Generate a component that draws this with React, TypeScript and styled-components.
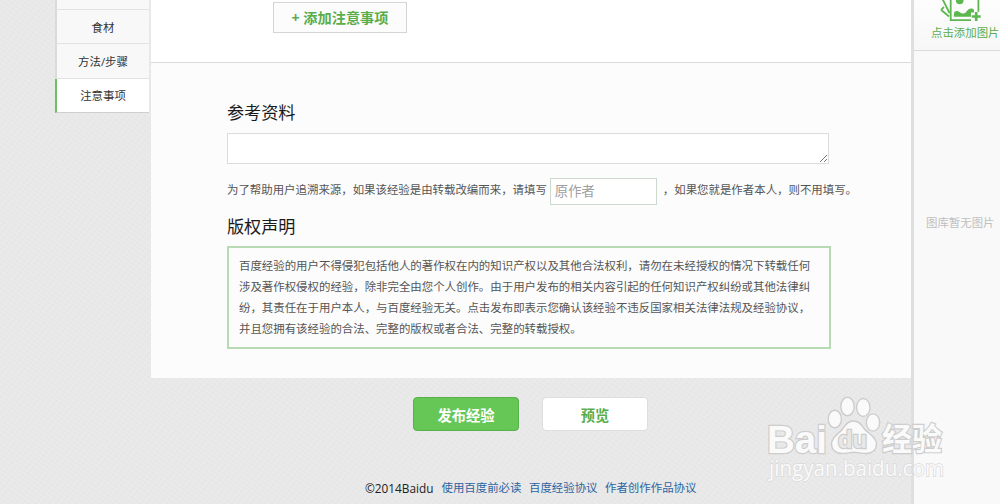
import React from 'react';
import styled, { createGlobalStyle } from 'styled-components';

const GlobalStyle = createGlobalStyle`
  * {
    box-sizing: border-box;
  }

  body {
    margin: 0;
    font-family: "Open Sans", "Noto Sans CJK SC", sans-serif;
    font-size: 11.43px;
    color: #555;
  }
`;

const steps = ['食材', '方法/步骤', '注意事项'];

const footerLinks = ['使用百度前必读', '百度经验协议', '作者创作作品协议'];

const AddPictureIcon: React.FC = () => (
  <svg width="44" height="22" viewBox="0 0 44 22" fill="none" stroke="#5db750" strokeWidth="1.8">
    <path d="M3.5 -1 L10.5 13 M2 9.8 L10 16.5 M2 9.8 L5 7" />
    <path d="M11.7 -1 V20.2 H32 M39.4 -1 V11.8" />
    <circle cx="20.7" cy="0.4" r="3.8" fill="#5db750" stroke="none" />
    <path
      d="M15 16.8 V13 C15.5 10.8 18.5 10.3 20.5 12 C23 14.2 25.500 14 27.500 11.500 C29.500 8.500 33 7.500 35 10 V12.500 H32 V16.800 Z"
      fill="#5db750"
      stroke="none"
    />
    <path d="M37.2 12 V21 M32.7 16.5 H41.7" strokeWidth="2.6" />
  </svg>
);

const BaiduLogo: React.FC = () => (
  <svg width="200" height="100" viewBox="0 0 200 100">
    <g fill="#fafafa" stroke="#cdcdcd" strokeWidth="1.4">
      <ellipse cx="94.8" cy="29" rx="6.6" ry="8.8" />
      <ellipse cx="107.5" cy="16.5" rx="6.7" ry="9.2" />
      <ellipse cx="123.3" cy="17.5" rx="6.7" ry="9" />
      <ellipse cx="133" cy="32.5" rx="6.7" ry="8.6" />
      <path d="M113.500 31 C119 31 121.500 34.500 124 38.500 C127 43 136.500 46.500 136.500 54 C136.500 60 132 63.500 126 63.500 C121 63.500 118 62.300 114 62.300 C110 62.300 107 63.500 102 63.500 C96 63.500 91.500 60 91.500 54 C91.500 46.500 100 43 103 38.500 C105.500 34.500 108 31 113.500 31 Z" />
    </g>
    <LogoText x="27" y="62.5" $size={39} textLength="60" lengthAdjust="spacingAndGlyphs">Bai</LogoText>
    <LogoText x="98" y="58" $size={23} $hollow textLength="29" lengthAdjust="spacingAndGlyphs">du</LogoText>
    <LogoText x="142" y="60" $size={31} textLength="60" lengthAdjust="spacingAndGlyphs">经验</LogoText>
    <LogoText x="29" y="85.5" $size={21} $thin textLength="175" lengthAdjust="spacingAndGlyphs">jingyan.baidu.com</LogoText>
  </svg>
);

const App: React.FC = () => {
  return (
    <Page>
      <GlobalStyle />
      <StepNav>
        <StepItem $first />
        {steps.map((step, index) => (
          <StepItem key={step} $active={index === steps.length - 1}>{step}</StepItem>
        ))}
      </StepNav>

      <Content>
        <NoticeSection>
          <AddButton>+ 添加注意事项</AddButton>
        </NoticeSection>
        <ReferenceSection>
          <Title>参考资料</Title>
          <ReferenceInput>
            <svg width="9" height="9" viewBox="0 0 9 9" stroke="#777" strokeWidth="1">
              <path d="M1 8 L8 1 M5 8 L8 5" />
            </svg>
          </ReferenceInput>
          <SourceRow>
            <span>为了帮助用户追溯来源，如果该经验是由转载改编而来，请填写</span>
            <AuthorInput placeholder="原作者" />
            <span>，如果您就是作者本人，则不用填写。</span>
          </SourceRow>
          <Title>版权声明</Title>
          <Copyright>
            <p>百度经验的用户不得侵犯包括他人的著作权在内的知识产权以及其他合法权利，请勿在未经授权的情况下转载任何</p>
            <p>涉及著作权侵权的经验，除非完全由您个人创作。由于用户发布的相关内容引起的任何知识产权纠纷或其他法律纠</p>
            <p>纷，其责任在于用户本人，与百度经验无关。点击发布即表示您确认该经验不违反国家相关法律法规及经验协议，</p>
            <p>并且您拥有该经验的合法、完整的版权或者合法、完整的转载授权。</p>
          </Copyright>
        </ReferenceSection>
        <Actions>
          <ActionButton $primary>发布经验</ActionButton>
          <ActionButton>预览</ActionButton>
        </Actions>
        <Footer>
          <span>©2014Baidu</span>
          {footerLinks.map((link) => (
            <a key={link}>{link}</a>
          ))}
        </Footer>
      </Content>

      <Gallery>
        <GalleryHeader>
          <AddPictureIcon />
          <span>点击添加图片</span>
        </GalleryHeader>
        <GalleryEmpty>图库暂无图片</GalleryEmpty>
      </Gallery>

      <Watermark>
        <BaiduLogo />
      </Watermark>
    </Page>
  );
};

export default App;

const Page = styled.div`
  position: relative;
  display: flex;
  width: 1000px;
  height: 504px;
  padding-left: 55px;
  overflow: hidden;
  background-color: #e8e8e8;
  background-image:
    repeating-linear-gradient(35deg, transparent 0 2px, rgba(255, 255, 255, 0.1) 2px 4px),
    repeating-linear-gradient(-50deg, transparent 0 3px, rgba(0, 0, 0, 0.008) 3px 5px);
`;

const StepNav = styled.ul`
  width: 96px;
  margin: 0;
  padding: 0 2px 0 0;
  list-style: none;
`;

const StepItem = styled.li<{ $active?: boolean; $first?: boolean }>`
  display: flex;
  align-items: center;
  justify-content: center;
  height: ${({ $first }) => ($first ? '10px' : '34.4px')};
  border-left: 2px solid ${({ $active }) => ($active ? '#6cc05f' : '#dadada')};
  border-bottom: 1px solid ${({ $active }) => ($active ? '#cfcfcf' : '#e2e2e2')};
  background: ${({ $active }) => ($active ? '#fff' : '#f8f8f9')};
  color: #333;
`;

const Content = styled.main`
  width: 760px;
`;

const NoticeSection = styled.section`
  height: 63px;
  padding: 2px 0 0 122px;
  border-bottom: 1px solid #dadada;
  background: #fff;
`;

const AddButton = styled.button`
  display: block;
  width: 134px;
  height: 31px;
  padding: 0 0 2px;
  border: 1px solid #d5d5d5;
  background: #fcfcfc;
  color: #5aad4b;
  font-family: inherit;
  font-size: 14.2px;
  font-weight: bold;
  white-space: nowrap;
`;

const ReferenceSection = styled.section`
  height: 315px;
  padding: 38px 0 0 76px;
  background: #fcfcfc;
`;

const Title = styled.h2`
  height: 24px;
  margin: 0;
  font-size: 17.14px;
  font-weight: normal;
  line-height: 24px;
  color: #1a1a1a;
`;

const ReferenceInput = styled.div`
  display: flex;
  align-items: flex-end;
  justify-content: flex-end;
  width: 602px;
  height: 31px;
  margin-top: 8px;
  padding: 0;
  border: 1px solid #dcdcdc;
  background: #fff;
`;

const SourceRow = styled.div`
  display: flex;
  align-items: center;
  height: 27px;
  margin: 14px 0 10px;
  white-space: nowrap;

  span {
    padding-bottom: 5px;
  }
`;

const AuthorInput = styled.input`
  width: 107px;
  height: 27px;
  margin: 0 6px 0 3px;
  padding: 0 5px 1px 4px;
  border: 1px solid #cbd9cf;
  border-radius: 0;
  background: #fff;
  font-family: inherit;
  font-size: 13.33px;

  &::placeholder {
    color: #a0a0a0;
  }
`;

const Copyright = styled.div`
  width: 604px;
  height: 103px;
  margin-top: 7px;
  padding: 8px 10px;
  border: 2px solid #b8dab4;

  p {
    margin: 0;
    line-height: 20.9px;
    white-space: nowrap;
  }
`;

const Actions = styled.div`
  display: flex;
  gap: 23px;
  padding: 19px 0 0 262px;
`;

const ActionButton = styled.button<{ $primary?: boolean }>`
  width: 106px;
  height: 34px;
  padding: 0;
  border: 1px solid ${({ $primary }) => ($primary ? '#57b04a' : '#dedede')};
  border-radius: 4px;
  background: ${({ $primary }) => ($primary ? '#66c757' : '#fff')};
  color: ${({ $primary }) => ($primary ? '#fff' : '#5aad4b')};
  font-family: inherit;
  font-size: 14.28px;
  font-weight: bold;
`;

const Footer = styled.footer`
  display: flex;
  gap: 7.5px;
  margin-top: 48px;
  padding-left: 214px;
  line-height: 18px;
  color: #222;
  white-space: nowrap;

  span {
    width: 69px;
    font-size: 11.8px;
  }

  a {
    color: #2d64a0;
  }
`;

const Gallery = styled.aside`
  width: 89px;
  height: 504px;
  border-left: 3px solid #dfdfdf;
  background: #f9f9f9;
  white-space: nowrap;
`;

const GalleryHeader = styled.div`
  display: flex;
  flex-direction: column;
  height: 51px;
  padding-left: 17px;
  border-bottom: 1px solid #dadada;
  background: linear-gradient(#fdfdfd, #f7f7f7);
  color: #5aad4b;
  line-height: 22px;

  svg {
    flex-shrink: 0;
    margin-left: 8px;
  }
`;

const GalleryEmpty = styled.p`
  margin: 163px 0 0 12px;
  line-height: 18px;
  color: #c0c0c0;
`;

const Watermark = styled.div`
  position: absolute;
  left: 740px;
  top: 390px;

  svg {
    display: block;
    overflow: visible;
  }
`;

const LogoText = styled.text<{ $size: number; $hollow?: boolean; $thin?: boolean }>`
  fill: ${({ $hollow }) => ($hollow ? '#e8e8e8' : '#fafafa')};
  stroke: ${({ $thin }) => ($thin ? '#dadada' : '#cdcdcd')};
  stroke-width: ${({ $thin }) => ($thin ? 1.4 : 2.4)}px;
  paint-order: stroke;
  font-family: ${({ $thin }) => ($thin ? '"Open Sans"' : '"Liberation Sans"')}, "Noto Sans CJK SC", sans-serif;
  font-size: ${({ $size }) => $size}px;
  font-weight: ${({ $thin }) => ($thin ? 400 : 700)};
`;
